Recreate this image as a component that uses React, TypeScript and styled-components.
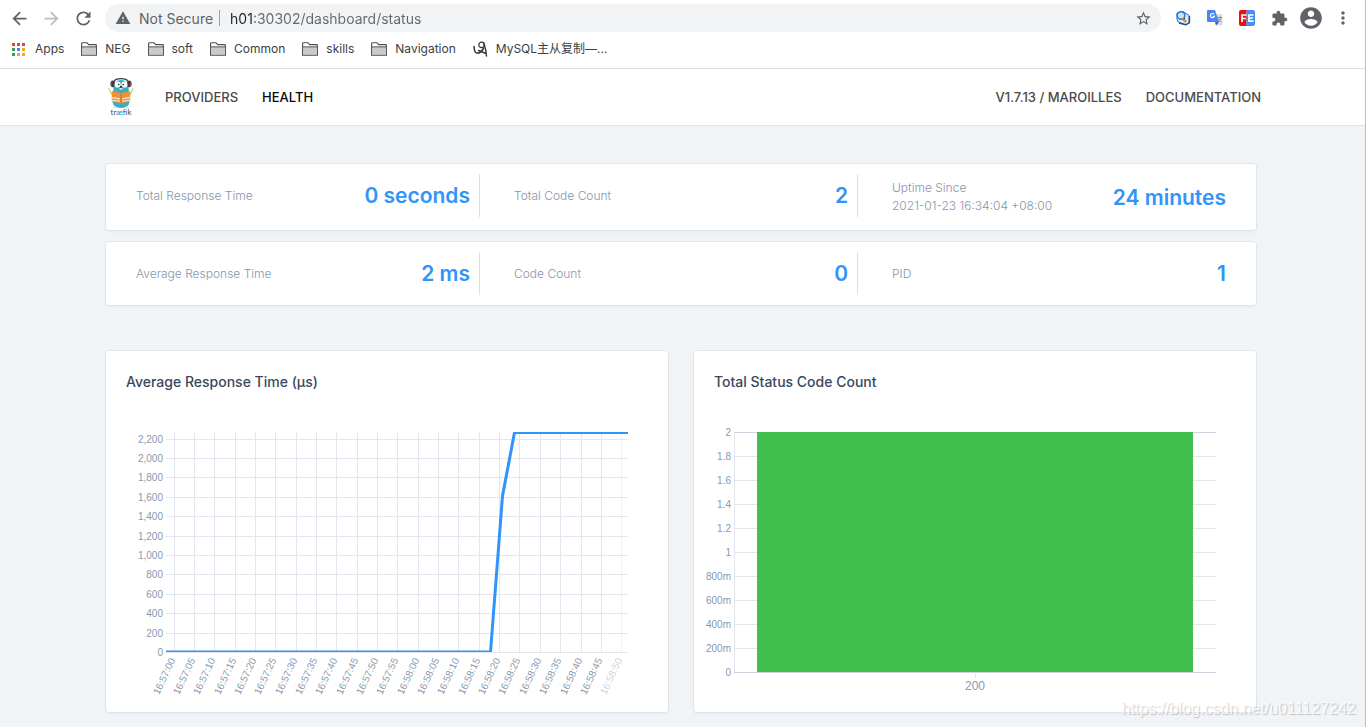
import React from "react";
import styled, { createGlobalStyle } from "styled-components";

const uiFont = `Inter, "Noto Sans CJK SC", sans-serif`;

const GlobalStyle = createGlobalStyle`
  *, *::before, *::after { box-sizing: border-box; }
  body { margin: 0; background: #f0f4f7; font-family: ${uiFont}; }
  button, input { font: inherit; border: 0; padding: 0; background: none; }
  a { color: inherit; text-decoration: none; }
  svg { display: block; flex: none; }
`;

const Window = styled.div`
  position: relative;
  border-right: 1px solid #bdbfc1;
`;

/* Browser chrome */

const Chrome = styled.header`
  background: #fff;
  border-bottom: 1px solid #dadce0;
`;

const Toolbar = styled.div`
  display: flex;
  align-items: center;
  height: 36px;
  padding: 0 6px 0 3px;
`;

const IconButton = styled.button<{ $color?: string }>`
  display: grid;
  place-items: center;
  flex: none;
  width: 32px;
  height: 32px;
  color: ${(p) => p.$color ?? "#5f6368"};
`;

const AddressBar = styled.div`
  display: flex;
  align-items: center;
  flex: 1;
  height: 28px;
  margin: 0 6px;
  padding: 0 2px 0 10px;
  border-radius: 14px;
  background: #f1f3f4;
  font-size: 14px;
  color: #5f6368;
`;

const Security = styled.label`
  display: flex;
  align-items: center;
  gap: 8px;
  margin-right: 10px;
  padding-right: 7px;
  white-space: nowrap;
  background: linear-gradient(#9fa3a7, #9fa3a7) right center / 1px 16px no-repeat;
`;

const Address = styled.input`
  flex: 1;
  min-width: 0;
  outline: 0;
  color: #5f6368;
  background: linear-gradient(90deg, #202124 24px, #63676b 24px);
  background-clip: text;
  -webkit-background-clip: text;
  -webkit-text-fill-color: transparent;
`;

const Bookmarks = styled.nav`
  display: flex;
  align-items: center;
  gap: 17px;
  height: 32px;
  padding: 0 12px 6px;
  font-size: 12px;
  line-height: 16px;
  color: #3c4043;
`;

const Bookmark = styled.a`
  display: flex;
  align-items: center;
  gap: 8px;
  height: 16px;
  white-space: nowrap;
`;

const Apps = styled(Bookmark)`
  gap: 10px;
`;

/* Dashboard */

const NavBar = styled.nav`
  padding-right: 3px;
  background: #fff;
  border-bottom: 1px solid #dfe3e8;
`;

const NavInner = styled.div`
  display: flex;
  align-items: center;
  gap: 24px;
  max-width: 1160px;
  height: 56px;
  margin: 0 auto;
  padding: 0 0 0 7px;
  font-size: 13px;
  font-weight: 500;
  white-space: nowrap;
  color: #4a4a4a;
`;

const Brand = styled.a`
  margin-right: 7px;
`;

const NavLink = styled.a<{ $active?: boolean }>`
  text-transform: uppercase;
  color: ${(p) => (p.$active ? "#0a0a0a" : "inherit")};
`;

const NavEnd = styled.div`
  display: flex;
  gap: 24px;
  margin-left: auto;
`;

const Page = styled.main`
  padding: 38px 3px 15px 0;
`;

const Container = styled.div`
  max-width: 1150px;
  margin: 0 auto;
`;

const Card = styled.section`
  background: #fff;
  border-radius: 3px;
  box-shadow: 0 2px 4px rgba(20, 40, 70, 0.04), 0 0 0 1px rgba(20, 40, 70, 0.05);
`;

const StatRow = styled(Card)`
  display: flex;
  align-items: flex-start;
  gap: 34px;
  padding: 10px 30px;
  margin-bottom: 12px;
`;

const Stat = styled.div`
  box-sizing: content-box;
  display: flex;
  flex: 1 1 0;
  align-items: center;
  justify-content: space-between;
  padding: 5px 0;

  &:not(:last-child) {
    padding-right: 9px;
    border-right: 1px solid #dbe0e7;
  }
`;

const StatLabel = styled.span`
  font-size: 12px;
  line-height: 18px;
  font-weight: 300;
  color: #8496ac;
`;

const StatValue = styled.span`
  font-size: 21px;
  line-height: 33px;
  font-weight: 600;
  white-space: nowrap;
  color: #3094fb;
`;

const Charts = styled.div`
  display: grid;
  grid-template-columns: 1fr 1fr;
  gap: 26px;
  margin-top: 46px;
`;

const ChartTitle = styled.h2`
  margin: 0;
  padding: 20px 20px 0;
  font-size: 14px;
  line-height: 21px;
  font-weight: 500;
  color: #3b475c;
`;

const ChartSvg = styled.svg`
  width: 100%;
  height: auto;
  font-family: "Liberation Sans", sans-serif;
  font-size: 10px;
  fill: #8799ad;
`;

const Grid = styled.g`
  stroke: #e4e5ed;
  shape-rendering: crispEdges;
`;

const Axis = styled.path`
  fill: none;
  stroke: #d0d3df;
  shape-rendering: crispEdges;
`;

const Watermark = styled.div`
  position: absolute;
  right: 9px;
  bottom: 9px;
  font-family: "Liberation Sans", sans-serif;
  font-size: 16px;
  line-height: 18px;
  color: rgba(255, 255, 255, 0.8);
  text-shadow: 1px 1px 1px rgba(0, 0, 0, 0.2);
`;

const Glyph = ({ d, size }: { d: string; size: number }) => (
  <svg width={size} height={size} viewBox="0 0 24 24" fill="currentColor" aria-hidden="true">
    <path d={d} />
  </svg>
);

const glyphs = {
  back: "M20 11H7.83l5.59-5.59L12 4l-8 8 8 8 1.41-1.41L7.83 13H20v-2z",
  forward: "M12 4l-1.41 1.41L16.17 11H4v2h12.17l-5.58 5.59L12 20l8-8z",
  reload:
    "M17.65 6.35C16.2 4.9 14.21 4 12 4c-4.42 0-7.99 3.58-7.99 8s3.57 8 7.99 8c3.73 0 6.84-2.55 7.73-6h-2.08c-.82 2.33-3.04 4-5.65 4-3.31 0-6-2.69-6-6s2.69-6 6-6c1.66 0 3.14.69 4.22 1.78L13 11h7V4l-2.35 2.35z",
  warning: "M1 21h22L12 2 1 21zm12-3h-2v-2h2v2zm0-4h-2v-4h2v4z",
  star: "M22 9.24l-7.19-.62L12 2 9.19 8.63 2 9.24l5.46 4.73L5.82 21 12 17.27 18.18 21l-1.63-7.03L22 9.24zM12 15.4l-3.76 2.27 1-4.28-3.32-2.88 4.38-.38L12 6.1l1.71 4.04 4.38.38-3.32 2.88 1 4.28L12 15.4z",
  puzzle:
    "M20.5 11H19V7c0-1.1-.9-2-2-2h-4V3.5C13 2.12 11.88 1 10.5 1S8 2.12 8 3.5V5H4c-1.1 0-1.99.9-1.99 2v3.8H3.5c1.49 0 2.7 1.21 2.7 2.7s-1.21 2.7-2.7 2.7H2V20c0 1.1.9 2 2 2h3.8v-1.5c0-1.49 1.21-2.7 2.7-2.7 1.49 0 2.7 1.21 2.7 2.7V22H17c1.1 0 2-.9 2-2v-4h1.5c1.38 0 2.5-1.12 2.5-2.5S21.88 11 20.5 11z",
  account:
    "M12 2C6.48 2 2 6.48 2 12s4.48 10 10 10 10-4.48 10-10S17.52 2 12 2zm0 3c1.66 0 3 1.34 3 3s-1.34 3-3 3-3-1.34-3-3 1.34-3 3-3zm0 14.2c-2.5 0-4.71-1.28-6-3.22.03-1.99 4-3.08 6-3.08 1.99 0 5.97 1.09 6 3.08-1.29 1.94-3.5 3.22-6 3.22z",
  more: "M12 8c1.1 0 2-.9 2-2s-.9-2-2-2-2 .9-2 2 .9 2 2 2zm0 2c-1.1 0-2 .9-2 2s.9 2 2 2 2-.9 2-2-.9-2-2-2zm0 6c-1.1 0-2 .9-2 2s.9 2 2 2 2-.9 2-2-.9-2-2-2z",
};

const FolderIcon = () => (
  <svg width="16" height="14" viewBox="0 0 16 14" aria-hidden="true">
    <path d="M.6 13.1V1.6Q.6.7 1.5.7H6l1.6 1.9h7q.8 0 .8.8v9.7z" fill="#fff" stroke="#4b4d50" strokeWidth="1.1" />
    <path d="M1 5.2h14v7.4H1z" fill="#cacaca" />
    <path d="M1 4.9h14" stroke="#4b4d50" />
  </svg>
);

const appColors = ["#ea4335", "#ea4335", "#ea4335", "#34a060", "#4285f4", "#f5a623", "#34a060", "#f5a623", "#f5a623"];

const AppsIcon = () => (
  <svg width="13" height="13" viewBox="0 0 13 13" shapeRendering="crispEdges" aria-hidden="true">
    {appColors.map((c, i) => (
      <rect key={i} x={(i % 3) * 5} y={Math.floor(i / 3) * 5} width="3" height="3" fill={c} />
    ))}
  </svg>
);

const SquiggleIcon = () => (
  <svg width="15" height="16" viewBox="0 0 15 16" fill="none" stroke="#3d3434" strokeLinecap="round" aria-hidden="true">
    <path d="M1 5.500c.2 3.400 1.200 6.400 3 6.600 2.600.2 4.800-1.800 6.500-4.600" strokeWidth="1.500" />
    <circle cx="8.500" cy="3.900" r="2.700" strokeWidth="1.200" />
    <path d="M11 2.500c1.200 3.600 2.200 8 2.500 12.500M5.500 9.500l7.500 3" strokeWidth="1.400" />
  </svg>
);

const SearchBookIcon = () => (
  <svg width="16" height="16" viewBox="0 0 16 16" aria-hidden="true">
    <path d="M2 9.500V3l6-1.500 6 4v7.500l-4 1.800-7-3z" fill="#d8ecfb" stroke="#2f67b8" />
    <path d="M4 13l7 1.700 3.500-2V6" fill="none" stroke="#1c4f9f" strokeWidth="1.300" />
    <circle cx="6" cy="5.500" r="3.800" fill="#bfe6ff" stroke="#287bd8" strokeWidth="1.500" />
    <path d="M7.500 8l3.500 4" stroke="#e08a1e" strokeWidth="2.600" />
    <path d="M8.500 9.500l1.500-1.500" stroke="#40352c" />
  </svg>
);

const TranslateIcon = () => (
  <svg width="16" height="16" viewBox="0 0 16 16" aria-hidden="true">
    <path d="M6 4h9.500v11.500H9z" fill="#dcdee0" />
    <path d="M0 1q0-1 1-1h7l4 12H1q-1 0-1-1z" fill="#4a86ee" />
    <path d="M8 12h4l-3 3.500z" fill="#2c5fc4" />
    <path d="M7.200 4.400A2.100 2.100 0 1 0 7.500 6.200H5.500" fill="none" stroke="#fff" strokeWidth="1.100" />
    <path d="M10.500 7.500H15M12.700 6.500v1M14 7.500c-.3 1.800-1.500 3.500-3 4.500M11.500 9c.5 1.300 1.500 2.500 3 3" fill="none" stroke="#6f8187" strokeWidth=".9" />
  </svg>
);

const FeIcon = () => (
  <svg width="16" height="16" viewBox="0 0 16 16" aria-hidden="true">
    <path d="M8 0H2Q0 0 0 2v12q0 2 2 2h6l-1-4 1-4-1-4z" fill="#e60f12" />
    <path d="M8 0h6q2 0 2 2v12q0 2-2 2H8l-1-4 1-4-1-4z" fill="#458ff0" />
    <path d="M3 12V5h4.500M3 8.500h4M14.500 5H10v6.200h4.500M10 8h4" fill="none" stroke="#fff" strokeWidth="1.700" />
  </svg>
);

const TraefikLogo = () => (
  <svg width="26" height="38" viewBox="0 0 26 38" role="img" aria-label="Træfik">
    <path d="M4 17L.7 10M22 17l3.300-7" stroke="#c5d96b" strokeWidth="1.200" />
    <path d="M5.500 9Q6 2 13 2t7.500 7l1 14q0 7-8.500 7t-8.500-7z" fill="#35aeca" />
    <path d="M6 3.500Q7 .6 13 .6T20 3.500" fill="none" stroke="#3d4142" strokeWidth="1.100" />
    <ellipse cx="4.800" cy="5.800" rx="2.300" ry="3.400" fill="#443c40" />
    <ellipse cx="21.200" cy="5.800" rx="2.300" ry="3.400" fill="#443c40" />
    <path d="M3.200 4.500v3.500M22.800 4.500v3.500" stroke="#c83c4b" />
    <circle cx="9.600" cy="6.500" r="3.100" fill="#fff" />
    <circle cx="16.400" cy="6.500" r="3.100" fill="#fff" />
    <circle cx="10.800" cy="6.500" r=".8" fill="#222" />
    <circle cx="15.200" cy="6.500" r=".8" fill="#222" />
    <ellipse cx="13" cy="9" rx="1.400" ry=".9" fill="#222" />
    <ellipse cx="13" cy="10.700" rx="1.700" ry="1" fill="#f3dcc4" />
    <path d="M3.800 13l9.200 2 9.200-2v10.500L13 25.500l-9.200-2z" fill="#f29132" />
    <path d="M13 15v10" stroke="#ba6a26" strokeWidth=".7" />
    <path d="M3.500 19.500l8.500 1.300M3.500 22.300l8.500.8M22.500 19.500L14 20.800M22.500 22.300l-8.500.8" stroke="#f4dfca" strokeWidth="1.300" />
    <path d="M5.500 30l2.500-1M20.500 30L18 29" stroke="#f3d2ae" strokeWidth="1.300" />
    <text x="13" y="37" textAnchor="middle" fontSize="8" fontFamily="Lato, sans-serif" fontWeight="400" fill="#4b4f50">
      tr<tspan fill="#35aeca" fontWeight="700">æ</tspan>fik
    </text>
  </svg>
);

const folders = ["NEG", "soft", "Common", "skills", "Navigation"];

type StatItem = { label: React.ReactNode; value: string };

const statRows: StatItem[][] = [
  [
    { label: "Total Response Time", value: "0 seconds" },
    { label: "Total Code Count", value: "2" },
    { label: <>Uptime Since<br />2021-01-23 16:34:04 +08:00</>, value: "24 minutes" },
  ],
  [
    { label: "Average Response Time", value: "2 ms" },
    { label: "Code Count", value: "0" },
    { label: "PID", value: "1" },
  ],
];

const pad = (n: number) => String(n).padStart(2, "0");

const timeTicks = Array.from({ length: 23 }, (_, i) => ({
  x: 68 + Math.floor(i * 20.35) + 0.5,
  label: `16:${pad(57 + Math.floor(i / 12))}:${pad((i % 12) * 5)}`,
}));

const responseTicks = Array.from({ length: 12 }, (_, i) => ({
  y: Math.round(260 - i * 19.4) + 0.5,
  label: (i * 200).toLocaleString("en-US"),
}));

const countLabels = ["0", "200m", "400m", "600m", "800m", "1", "1.2", "1.4", "1.6", "1.8", "2"];

const ResponseChart = () => (
  <ChartSvg viewBox="0 0 562 320" role="img" aria-label="Average response time over the last two minutes">
    <clipPath id="plot">
      <rect x="60" y="40" width="462" height="220" />
    </clipPath>
    <Grid>
      {responseTicks.map((t) => (
        <path key={t.label} d={`M60 ${t.y}H522`} />
      ))}
      {timeTicks.map((t, i) => (
        <path key={t.label} d={`M${t.x} 40V261`} opacity={i === 22 ? 0.45 : 1} />
      ))}
    </Grid>
    {responseTicks.map((t) => (
      <text key={t.label} x="57" y={t.y + 3} textAnchor="end">
        {t.label}
      </text>
    ))}
    {timeTicks.map((t, i) => (
      <text key={t.label} transform={`translate(${t.x + 1} 268) rotate(-65)`} textAnchor="end" opacity={i === 22 ? 0.45 : 1}>
        {t.label}
      </text>
    ))}
    <path d="M60 260H384.500L396.500 104L408.500 40.500H522" clipPath="url(#plot)" fill="none" stroke="#3094fb" strokeWidth="3" />
  </ChartSvg>
);

const StatusChart = () => (
  <ChartSvg viewBox="0 0 562 320" role="img" aria-label="Total status code count">
    <Grid>
      {countLabels.map((label, i) => (
        <path key={label} d={`M40 ${280.5 - i * 24}H522`} />
      ))}
      <path d="M40.500 40V280M281.500 280V286" />
    </Grid>
    <Axis d="M40 40.500H522M40 280.500H522" />
    {countLabels.map((label, i) => (
      <text key={label} x="37" y={284 - i * 24} textAnchor="end">
        {label}
      </text>
    ))}
    <rect x="63" y="40" width="436" height="240" fill="#41bf4f" />
    <text x="281" y="298" textAnchor="middle" fontSize="12">
      200
    </text>
  </ChartSvg>
);

export default function App() {
  return (
    <Window>
      <GlobalStyle />
      <Chrome>
        <Toolbar>
          <IconButton aria-label="Back"><Glyph d={glyphs.back} size={21} /></IconButton>
          <IconButton aria-label="Forward" $color="#bbbdc0"><Glyph d={glyphs.forward} size={21} /></IconButton>
          <IconButton aria-label="Reload"><Glyph d={glyphs.reload} size={21} /></IconButton>
          <AddressBar>
            <Security htmlFor="address">
              <Glyph d={glyphs.warning} size={16} />
              Not Secure
            </Security>
            <Address id="address" defaultValue="h01:30302/dashboard/status" />
            <IconButton aria-label="Bookmark this page"><Glyph d={glyphs.star} size={17} /></IconButton>
          </AddressBar>
          <IconButton aria-label="Search extension"><SearchBookIcon /></IconButton>
          <IconButton aria-label="Translate"><TranslateIcon /></IconButton>
          <IconButton aria-label="FE helper"><FeIcon /></IconButton>
          <IconButton aria-label="Extensions"><Glyph d={glyphs.puzzle} size={17} /></IconButton>
          <IconButton aria-label="Profile"><Glyph d={glyphs.account} size={26} /></IconButton>
          <IconButton aria-label="Menu"><Glyph d={glyphs.more} size={20} /></IconButton>
        </Toolbar>
        <Bookmarks aria-label="Bookmarks">
          <Apps href="#apps"><AppsIcon />Apps</Apps>
          {folders.map((name) => (
            <Bookmark key={name} href={`#${name}`}><FolderIcon />{name}</Bookmark>
          ))}
          <Bookmark href="#mysql"><SquiggleIcon />MySQL主从复制—...</Bookmark>
        </Bookmarks>
      </Chrome>

      <NavBar aria-label="Dashboard">
        <NavInner>
          <Brand href="#home"><TraefikLogo /></Brand>
          <NavLink href="#providers">Providers</NavLink>
          <NavLink href="#health" $active>Health</NavLink>
          <NavEnd>
            <NavLink href="#version">V1.7.13 / Maroilles</NavLink>
            <NavLink href="#docs">Documentation</NavLink>
          </NavEnd>
        </NavInner>
      </NavBar>

      <Page>
        <Container>
          {statRows.map((row, i) => (
            <StatRow key={i}>
              {row.map((s, j) => (
                <Stat key={j}>
                  <StatLabel>{s.label}</StatLabel>
                  <StatValue>{s.value}</StatValue>
                </Stat>
              ))}
            </StatRow>
          ))}
          <Charts>
            <Card>
              <ChartTitle>Average Response Time (µs)</ChartTitle>
              <ResponseChart />
            </Card>
            <Card>
              <ChartTitle>Total Status Code Count</ChartTitle>
              <StatusChart />
            </Card>
          </Charts>
        </Container>
      </Page>
      <Watermark>https://blog.csdn.net/u011127242</Watermark>
    </Window>
  );
}
